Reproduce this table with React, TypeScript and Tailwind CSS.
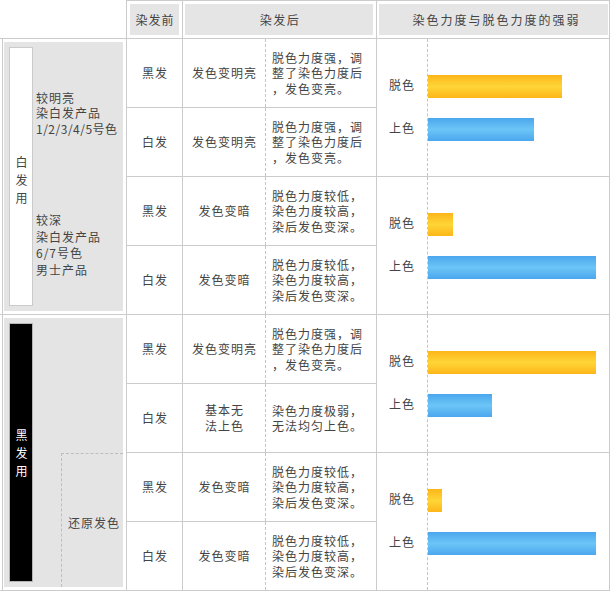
import React from "react";

const B = "border-[#cbcbcb]";

const DESC_A = ["脱色力度强，调", "整了染色力度后", "，发色变亮。"];
const DESC_B = ["脱色力度较低，", "染色力度较高，", "染后发色变深。"];
const DESC_C = ["染色力度极弱，", "无法均匀上色。"];

type Row = { before: string; after: string[]; desc: string[] };
type Section = { rows: Row[]; tuo: number; shang: number };

const sections: Section[] = [
  {
    rows: [
      { before: "黑发", after: ["发色变明亮"], desc: DESC_A },
      { before: "白发", after: ["发色变明亮"], desc: DESC_A },
    ],
    tuo: 134,
    shang: 106,
  },
  {
    rows: [
      { before: "黑发", after: ["发色变暗"], desc: DESC_B },
      { before: "白发", after: ["发色变暗"], desc: DESC_B },
    ],
    tuo: 25,
    shang: 168,
  },
  {
    rows: [
      { before: "黑发", after: ["发色变明亮"], desc: DESC_A },
      { before: "白发", after: ["基本无", "法上色"], desc: DESC_C },
    ],
    tuo: 168,
    shang: 64,
  },
  {
    rows: [
      { before: "黑发", after: ["发色变暗"], desc: DESC_B },
      { before: "白发", after: ["发色变暗"], desc: DESC_B },
    ],
    tuo: 14,
    shang: 168,
  },
];

function DataRow({ row, top }: { row: Row; top: boolean }) {
  return (
    <div className={`flex ${top ? "h-[68px]" : `h-[69px] border-t ${B}`}`}>
      <div className={`w-[56px] border-l ${B} flex items-center justify-center`}>
        <span className="tracking-[1px] pl-[1px]">{row.before}</span>
      </div>
      <div className={`w-[83px] border-l ${B} flex flex-col items-center justify-center leading-[16px]`}>
        {row.after.map((t) => (
          <span key={t} className="tracking-[1px] pl-[1px] whitespace-nowrap">
            {t}
          </span>
        ))}
      </div>
      <div className="w-[111px] border-l border-dashed border-[#c4c4c4] flex flex-col justify-center pl-[6px] leading-[15.5px]">
        {row.desc.map((t, i) => (
          <span key={i} className="tracking-[1px] whitespace-nowrap">
            {t}
          </span>
        ))}
      </div>
    </div>
  );
}

function Chart({ tuo, shang }: { tuo: number; shang: number }) {
  return (
    <div className={`w-[234px] border-l border-r ${B} flex`}>
      <div className="w-[50px] flex flex-col justify-center gap-[20px] pb-[3px]">
        <div className="h-[23px] flex items-center justify-center tracking-[1px]">脱色</div>
        <div className="h-[23px] flex items-center justify-center tracking-[1px]">上色</div>
      </div>
      <div className="flex-1 border-l border-dashed border-[#c4c4c4] flex flex-col justify-center gap-[20px] pt-[1px]">
        <div
          className="h-[23px] bg-[linear-gradient(to_bottom,#fcb619,#ffd537_50%,#fcb619)]"
          style={{ width: tuo }}
        />
        <div
          className="h-[23px] bg-[linear-gradient(to_bottom,#4ba7ee,#6cc5f6_50%,#4ba7ee)]"
          style={{ width: shang }}
        />
      </div>
    </div>
  );
}

export default function App() {
  return (
    <div className="w-[610px] h-[591px] bg-white text-[12px] text-[#444] font-['Noto_Sans_CJK_SC','Noto_Sans',sans-serif] leading-none overflow-hidden">
      {/* header */}
      <div className="flex h-[38px]">
        <div className="w-[126px]" />
        <div className={`w-[56px] border-l border-t ${B} p-[3px]`}>
          <div className="h-full bg-[#e5e5e5] flex items-center justify-center tracking-[1px] pl-[1px]">
            染发前
          </div>
        </div>
        <div className={`w-[194px] border-l border-t ${B} pl-[2px] pr-[3px] py-[3px]`}>
          <div className="h-full bg-[#e5e5e5] flex items-center justify-center tracking-[1.5px] pl-[2px]">
            染发后
          </div>
        </div>
        <div className={`w-[234px] border-l border-t border-r ${B} pl-[2px] pr-[1px] py-[3px]`}>
          <div className="h-full bg-[#e5e5e5] flex items-center justify-center tracking-[2px] pl-[6px]">
            染色力度与脱色力度的强弱
          </div>
        </div>
      </div>

      <div className="flex">
        {/* left column */}
        <div className="w-[126px] flex flex-col">
          <div className={`h-[276px] border-t ${B}`}>
            <div className={`h-full ml-[2px] border-l ${B} pl-[1px] pr-[3px] py-[3px]`}>
              <div className="h-full bg-[#e4e4e4] flex">
                <div className={`w-[24px] ml-[5px] my-[5px] bg-white border ${B} flex flex-col items-center justify-center pt-[6px] pl-[1px] leading-[18px] text-[12px]`}>
                  <span>白</span>
                  <span>发</span>
                  <span>用</span>
                </div>
                <div className="flex-1 ml-[3px] flex flex-col">
                  <div className="flex-1 flex flex-col justify-center pt-[5px] leading-[15.5px]">
                    <span className="tracking-[1px]">较明亮</span>
                    <span className="tracking-[1px]">染白发产品</span>
                    <span className="tracking-[0.5px]">1/2/3/4/5号色</span>
                  </div>
                  <div className="flex-1 flex flex-col justify-center leading-[16.5px]">
                    <span className="tracking-[1px]">较深</span>
                    <span className="tracking-[1px]">染白发产品</span>
                    <span className="tracking-[1px]">6/7号色</span>
                    <span className="tracking-[1px]">男士产品</span>
                  </div>
                </div>
              </div>
            </div>
          </div>
          <div className={`h-[277px] border-t border-b ${B}`}>
            <div className={`h-full ml-[2px] border-l ${B} pl-[1px] pr-[3px] py-[3px]`}>
              <div className="h-full bg-[#e4e4e4] flex">
                <div className="w-[24px] ml-[5px] my-[5px] bg-black border border-[#b5b5b5] flex flex-col items-center justify-center pt-[1px] pl-[1px] leading-[18px] text-[12px] text-white">
                  <span>黑</span>
                  <span>发</span>
                  <span>用</span>
                </div>
                <div className="flex-1 flex flex-col">
                  <div className="h-[135px]" />
                  <div className="flex-1 ml-[28px] border-l border-t border-dashed border-[#bdbdbd] flex items-center pl-[6px] pt-[4px]">
                    <span className="tracking-[1px] whitespace-nowrap">还原发色</span>
                  </div>
                </div>
              </div>
            </div>
          </div>
        </div>

        {/* right part */}
        <div className="w-[484px] flex flex-col">
          {sections.map((s, i) => (
            <div
              key={i}
              className={`flex border-t ${B} ${i === sections.length - 1 ? "h-[139px] border-b" : "h-[138px]"}`}
            >
              <div className="w-[250px] flex flex-col">
                <DataRow row={s.rows[0]} top />
                <DataRow row={s.rows[1]} top={false} />
              </div>
              <Chart tuo={s.tuo} shang={s.shang} />
            </div>
          ))}
        </div>
      </div>
    </div>
  );
}
